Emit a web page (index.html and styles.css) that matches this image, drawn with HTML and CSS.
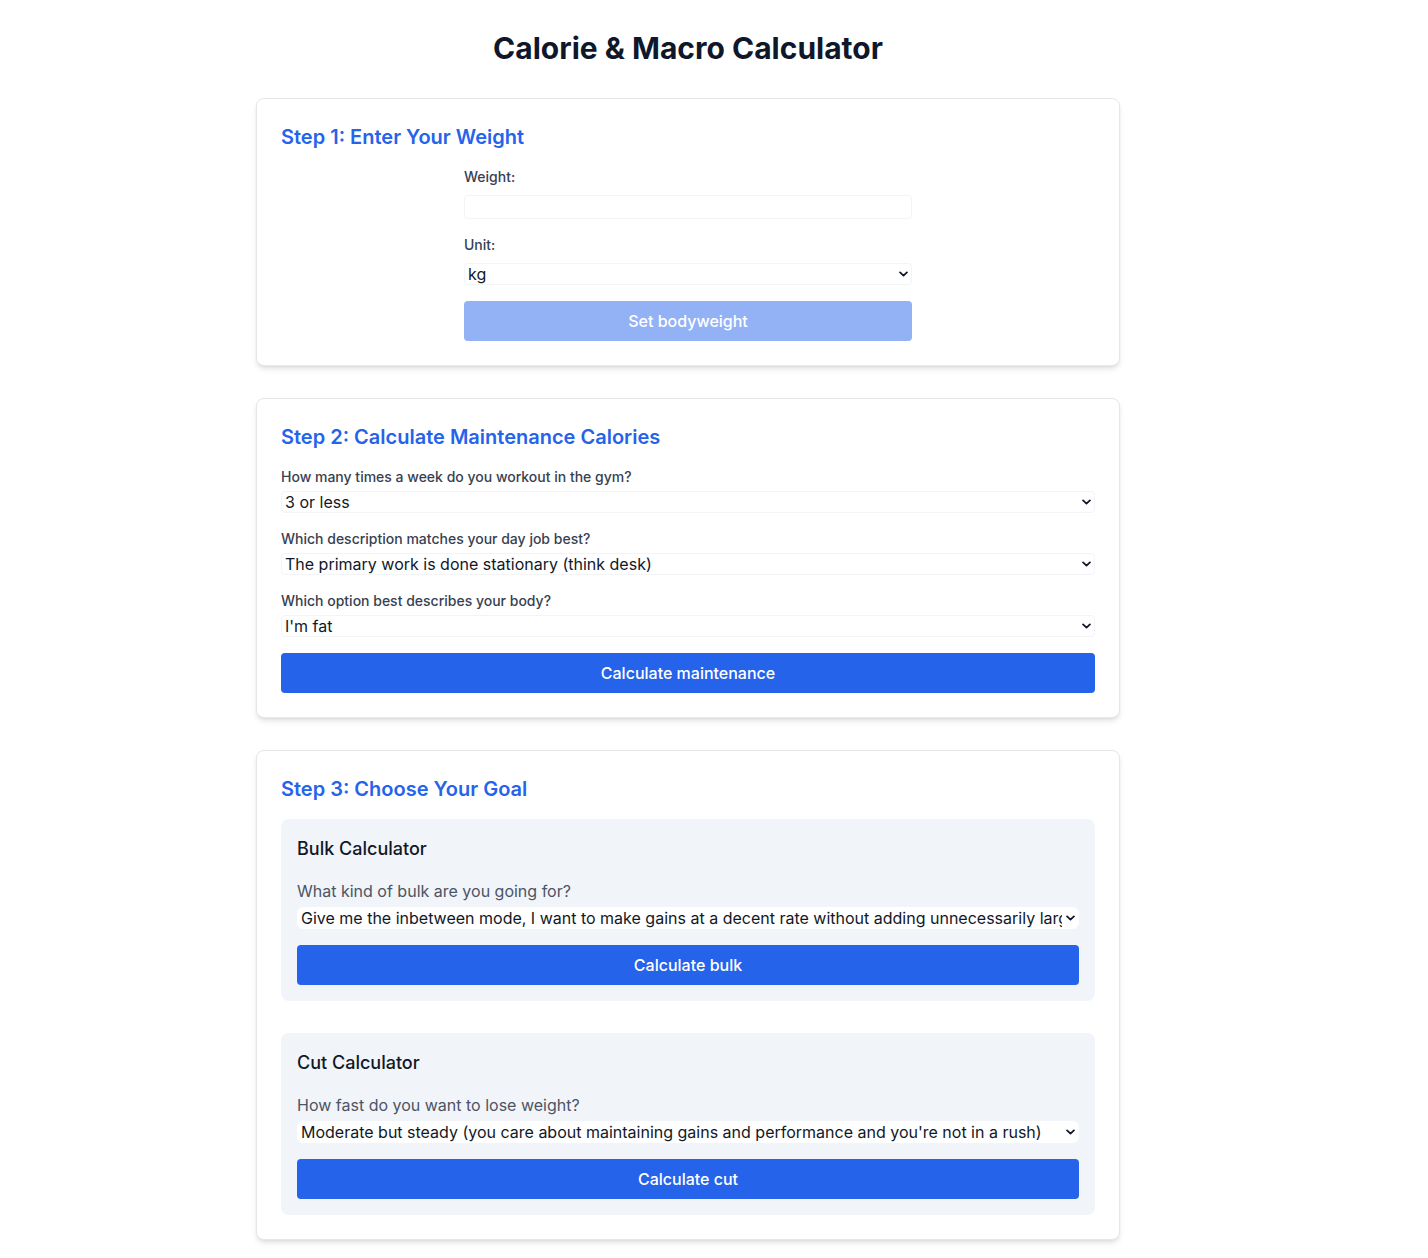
FILE: index.html
```html
<!DOCTYPE html>
<html lang="en">
<head>
<meta charset="utf-8">
<title>Calorie &amp; Macro Calculator</title>
<link rel="stylesheet" href="styles.css">
</head>
<body>
<div class="page">
  <h1 class="title">Calorie &amp; Macro Calculator</h1>

  <section class="card">
    <h2 class="step">Step 1: Enter Your Weight</h2>
    <div class="narrow">
      <label class="lbl lbl-wide">Weight:</label>
      <input class="input" type="number">
      <label class="lbl lbl-wide">Unit:</label>
      <div class="sel-wrap">
        <select class="sel"><option>kg</option><option>lbs</option></select>
        <svg class="chev" viewBox="0 0 10 6" width="9" height="6"><path d="M1.2 1.2 L5 4.8 L8.8 1.2" fill="none" stroke="#111827" stroke-width="2" stroke-linecap="round" stroke-linejoin="round"/></svg>
      </div>
      <button class="btn btn-disabled">Set bodyweight</button>
    </div>
  </section>

  <section class="card">
    <h2 class="step">Step 2: Calculate Maintenance Calories</h2>
    <label class="lbl">How many times a week do you workout in the gym?</label>
    <div class="sel-wrap">
      <select class="sel"><option>3 or less</option><option>4-5</option><option>6 or more</option></select>
      <svg class="chev" viewBox="0 0 10 6" width="9" height="6"><path d="M1.2 1.2 L5 4.8 L8.8 1.2" fill="none" stroke="#111827" stroke-width="2" stroke-linecap="round" stroke-linejoin="round"/></svg>
    </div>
    <label class="lbl">Which description matches your day job best?</label>
    <div class="sel-wrap">
      <select class="sel"><option>The primary work is done stationary (think desk)</option><option>Some walking</option></select>
      <svg class="chev" viewBox="0 0 10 6" width="9" height="6"><path d="M1.2 1.2 L5 4.8 L8.8 1.2" fill="none" stroke="#111827" stroke-width="2" stroke-linecap="round" stroke-linejoin="round"/></svg>
    </div>
    <label class="lbl">Which option best describes your body?</label>
    <div class="sel-wrap">
      <select class="sel"><option>I'm fat</option><option>I'm average</option><option>I'm lean</option></select>
      <svg class="chev" viewBox="0 0 10 6" width="9" height="6"><path d="M1.2 1.2 L5 4.8 L8.8 1.2" fill="none" stroke="#111827" stroke-width="2" stroke-linecap="round" stroke-linejoin="round"/></svg>
    </div>
    <button class="btn">Calculate maintenance</button>
  </section>

  <section class="card">
    <h2 class="step">Step 3: Choose Your Goal</h2>
    <div class="box">
      <h3 class="box-title">Bulk Calculator</h3>
      <label class="q">What kind of bulk are you going for?</label>
      <div class="sel-wrap">
        <select class="sel sel-white"><option>Give me the inbetween mode, I want to make gains at a decent rate without adding unnecessarily large amounts of fat</option></select>
        <svg class="chev" viewBox="0 0 10 6" width="9" height="6"><path d="M1.2 1.2 L5 4.8 L8.8 1.2" fill="none" stroke="#111827" stroke-width="2" stroke-linecap="round" stroke-linejoin="round"/></svg>
      </div>
      <button class="btn">Calculate bulk</button>
    </div>
    <div class="box">
      <h3 class="box-title">Cut Calculator</h3>
      <label class="q">How fast do you want to lose weight?</label>
      <div class="sel-wrap">
        <select class="sel sel-white"><option>Moderate but steady (you care about maintaining gains and performance and you're not in a rush)</option></select>
        <svg class="chev" viewBox="0 0 10 6" width="9" height="6"><path d="M1.2 1.2 L5 4.8 L8.8 1.2" fill="none" stroke="#111827" stroke-width="2" stroke-linecap="round" stroke-linejoin="round"/></svg>
      </div>
      <button class="btn">Calculate cut</button>
    </div>
  </section>
</div>
</body>
</html>
```

FILE: styles.css
```css
* { box-sizing: border-box; }

html, body { background: #ffffff; }

body {
  margin: 0;
  padding: 30px 52px 0 0;
  font-family: Inter, "Liberation Sans", sans-serif;
  color: #111827;
}

.page {
  width: 864px;
  margin: 0 auto;
}

.title {
  margin: 0 0 32px;
  font-size: 30px;
  line-height: 36px;
  font-weight: 700;
  text-align: center;
  color: #0f172a;
}

.card {
  background: #ffffff;
  border: 1px solid #e5e7eb;
  border-radius: 8px;
  padding: 24px;
  margin-bottom: 32px;
  box-shadow: 0 4px 6px -1px rgba(0,0,0,0.1), 0 2px 4px -2px rgba(0,0,0,0.1);
  display: flex;
  flex-direction: column;
}

.step {
  margin: 0 0 16px;
  font-size: 20px;
  line-height: 28px;
  font-weight: 600;
  color: #2563eb;
}

.narrow {
  width: 448px;
  margin: 0 auto;
  display: flex;
  flex-direction: column;
}

.lbl {
  display: block;
  font-size: 14px;
  line-height: 20px;
  font-weight: 500;
  color: #374151;
  margin-bottom: 4px;
}

.lbl-wide { margin-bottom: 8px; }

.input {
  display: block;
  width: 100%;
  height: 24px;
  border: 1px solid #f3f4f6;
  border-radius: 4px;
  background: #ffffff;
  margin: 0 0 16px;
  padding: 0 4px;
  font: inherit;
}

.sel-wrap {
  position: relative;
  margin-bottom: 16px;
}

.sel {
  display: block;
  width: 100%;
  height: 22px;
  appearance: none;
  -webkit-appearance: none;
  border: 1px solid #f3f4f6;
  border-radius: 4px;
  background: #ffffff;
  padding: 0 16px 0 3px;
  font-family: Inter, "Liberation Sans", sans-serif;
  font-size: 16px;
  line-height: 20px;
  color: #111827;
  overflow: hidden;
  white-space: nowrap;
}

.sel-white {
  border-color: #ffffff;
  border-radius: 6px;
}

.chev {
  position: absolute;
  right: 4px;
  top: 8px;
  pointer-events: none;
}

.btn {
  display: block;
  width: 100%;
  height: 40px;
  border: 0;
  border-radius: 4px;
  background: #2563eb;
  color: #ffffff;
  font-family: Inter, "Liberation Sans", sans-serif;
  font-size: 16px;
  font-weight: 500;
  line-height: 24px;
  cursor: pointer;
}

.btn-disabled {
  background: #93b1f5;
}

.box {
  background: #f1f4f9;
  border-radius: 8px;
  padding: 16px;
  margin-bottom: 32px;
}

.box:last-child { margin-bottom: 0; }

.box-title {
  margin: 0 0 16px;
  font-size: 18px;
  line-height: 28px;
  font-weight: 500;
  color: #111827;
}

.q {
  display: block;
  font-size: 16px;
  line-height: 24px;
  color: #4b5563;
  margin-bottom: 4px;
}
```
